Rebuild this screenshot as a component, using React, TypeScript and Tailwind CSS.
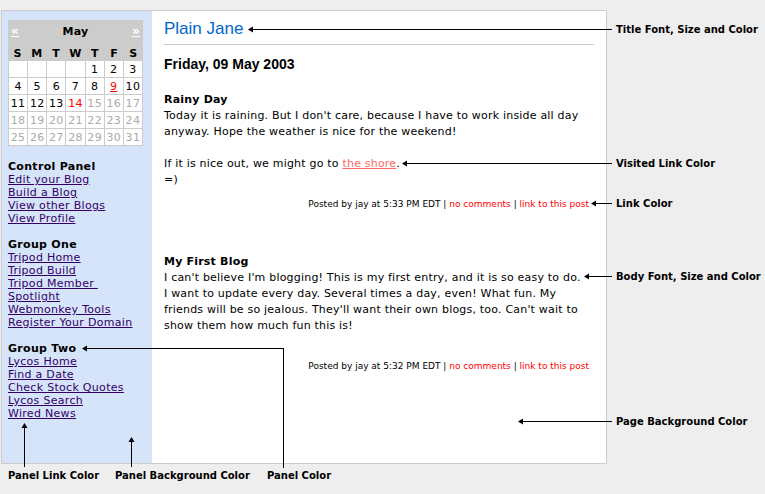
import React from 'react';

const verdana = { fontFamily: '"DejaVu Sans", Verdana, sans-serif' };
const arial = { fontFamily: '"Liberation Sans", Arial, sans-serif' };

const days: (number | null)[] = [
  null, null, null, null, 1, 2, 3,
  4, 5, 6, 7, 8, 9, 10,
  11, 12, 13, 14, 15, 16, 17,
  18, 19, 20, 21, 22, 23, 24,
  25, 26, 27, 28, 29, 30, 31,
];

const Calendar = () => (
  <div className="w-[135px] bg-[#cccccc] text-[11px] leading-none tracking-[0.3px]">
    <div className="flex items-center justify-between h-[21px] px-[3px] pt-[1px]">
      <span className="text-white font-bold underline text-[12px]">&laquo;</span>
      <span className="font-bold text-black">May</span>
      <span className="text-white font-bold underline text-[12px]">&raquo;</span>
    </div>
    <div className="grid grid-cols-7 h-[19px] pt-[7px] text-center font-bold text-black">
      {['S', 'M', 'T', 'W', 'T', 'F', 'S'].map((d, i) => (
        <span key={i}>{d}</span>
      ))}
    </div>
    <div className="grid grid-cols-7 gap-[1px] p-[1px]">
      {days.map((d, i) => {
        let color = 'text-black';
        if (d === 9 || d === 14) color = 'text-[#ff0000]';
        else if (d !== null && d > 14) color = 'text-[#aaaaaa]';
        return (
          <div key={i} className={`bg-white h-[16px] flex items-center justify-center ${color}`}>
            {d === 9 ? <span className="underline">9</span> : d}
          </div>
        );
      })}
    </div>
  </div>
);

const PanelGroup = ({ title, links }: { title: string; links: string[] }) => (
  <div className="mb-[13px]">
    <div className="font-bold text-black">{title}</div>
    {links.map((l) => (
      <a key={l} href="#" className="block underline text-[#330066] whitespace-pre">
        {l}
      </a>
    ))}
  </div>
);

const Posted = ({ time }: { time: string }) => (
  <div className="text-right text-[9px] tracking-normal pr-[5px] text-black whitespace-nowrap">
    Posted by jay at {time} EDT |{' '}
    <a href="#" className="text-[#ff0000]">no comments</a> |{' '}
    <a href="#" className="text-[#ff0000]">link to this post</a>
  </div>
);

const Arrow = ({ x, y, dir }: { x: number; y: number; dir: 'left' | 'up' }) =>
  dir === 'left' ? (
    <polygon points={`${x},${y} ${x + 5},${y - 3} ${x + 5},${y + 3}`} fill="#000" />
  ) : (
    <polygon points={`${x},${y} ${x - 3},${y + 5} ${x + 3},${y + 5}`} fill="#000" />
  );

const Label = ({ x, y, children }: { x: number; y: number; children: React.ReactNode }) => (
  <div
    className="absolute text-[10px] font-bold text-black leading-none whitespace-nowrap"
    style={{ left: x, top: y, ...verdana }}
  >
    {children}
  </div>
);

export default function App() {
  return (
    <div className="relative w-[765px] h-[494px] bg-[#eeeeee] overflow-hidden" style={verdana}>
      <div className="ml-[1px] mt-[10px] w-[606px] h-[454px] border border-[#cccccc] flex">
        {/* Panel */}
        <div className="w-[150px] shrink-0 bg-[#d6e4fa] pl-[6px] pt-[9px] text-[11px] leading-[13px] tracking-[0.3px]">
          <Calendar />
          <div className="mt-[14px]">
            <PanelGroup
              title="Control Panel"
              links={['Edit your Blog', 'Build a Blog', 'View other Blogs', 'View Profile']}
            />
            <PanelGroup
              title="Group One"
              links={[
                'Tripod Home',
                'Tripod Build',
                'Tripod Member ',
                'Spotlight',
                'Webmonkey Tools',
                'Register Your Domain',
              ]}
            />
            <PanelGroup
              title="Group Two"
              links={['Lycos Home', 'Find a Date', 'Check Stock Quotes', 'Lycos Search', 'Wired News']}
            />
          </div>
        </div>

        {/* Main */}
        <div className="flex-1 min-w-0 bg-white px-[12px] text-[11px] leading-[16px] tracking-[0.2px] text-black">
          <h1 className="text-[17px] leading-none tracking-normal text-[#0066cc] pt-[9px]" style={arial}>
            Plain Jane
          </h1>
          <div className="mt-[7px] h-[1px] bg-[#cccccc]" />
          <h2 className="mt-[12px] text-[14px] leading-none tracking-normal font-bold" style={arial}>
            Friday, 09 May 2003
          </h2>

          <div className="mt-[21px]">
            <div className="font-bold">Rainy Day</div>
            <p className="whitespace-nowrap">
              Today it is raining. But I don't care, because I have to work inside all day
              <br />
              anyway. Hope the weather is nice for the weekend!
              <br />
              <br />
              If it is nice out, we might go to{' '}
              <a href="#" className="text-[#ff6666] underline">the shore</a>.
              <br />
              =)
            </p>
            <div className="mt-[8px]">
              <Posted time="5:33 PM" />
            </div>
          </div>

          <div className="mt-[42px]">
            <div className="font-bold">My First Blog</div>
            <p className="whitespace-nowrap">
              I can't believe I'm blogging! This is my first entry, and it is so easy to do.
              <br />
              I want to update every day. Several times a day, even! What fun. My
              <br />
              friends will be so jealous. They'll want their own blogs, too. Can't wait to
              <br />
              show them how much fun this is!
            </p>
            <div className="mt-[24px]">
              <Posted time="5:32 PM" />
            </div>
          </div>
        </div>
      </div>

      {/* Annotations */}
      <svg className="absolute inset-0 pointer-events-none" width="765" height="494">
        <g stroke="#000" strokeWidth="1" shapeRendering="crispEdges">
          <line x1="250" y1="29.5" x2="612" y2="29.5" />
          <line x1="404" y1="163.5" x2="612" y2="163.5" />
          <line x1="593" y1="203.5" x2="612" y2="203.5" />
          <line x1="586" y1="276.5" x2="612" y2="276.5" />
          <line x1="520" y1="421.5" x2="612" y2="421.5" />
          <polyline points="84,348.5 283.5,348.5 283.5,468" fill="none" />
          <line x1="24.5" y1="425" x2="24.5" y2="467" />
          <line x1="131.5" y1="439" x2="131.5" y2="467" />
        </g>
        <Arrow x={248} y={29.5} dir="left" />
        <Arrow x={402} y={163.5} dir="left" />
        <Arrow x={591} y={203.5} dir="left" />
        <Arrow x={584} y={276.5} dir="left" />
        <Arrow x={518} y={421.5} dir="left" />
        <Arrow x={82} y={348.5} dir="left" />
        <Arrow x={24.5} y={423} dir="up" />
        <Arrow x={131.5} y={437} dir="up" />
      </svg>

      <Label x={616} y={25}>Title Font, Size and Color</Label>
      <Label x={616} y={159}>Visited Link Color</Label>
      <Label x={616} y={199}>Link Color</Label>
      <Label x={616} y={272}>Body Font, Size and Color</Label>
      <Label x={616} y={417}>Page Background Color</Label>
      <Label x={8} y={471}>Panel Link Color</Label>
      <Label x={115} y={471}>Panel Background Color</Label>
      <Label x={267} y={471}>Panel Color</Label>
    </div>
  );
}
